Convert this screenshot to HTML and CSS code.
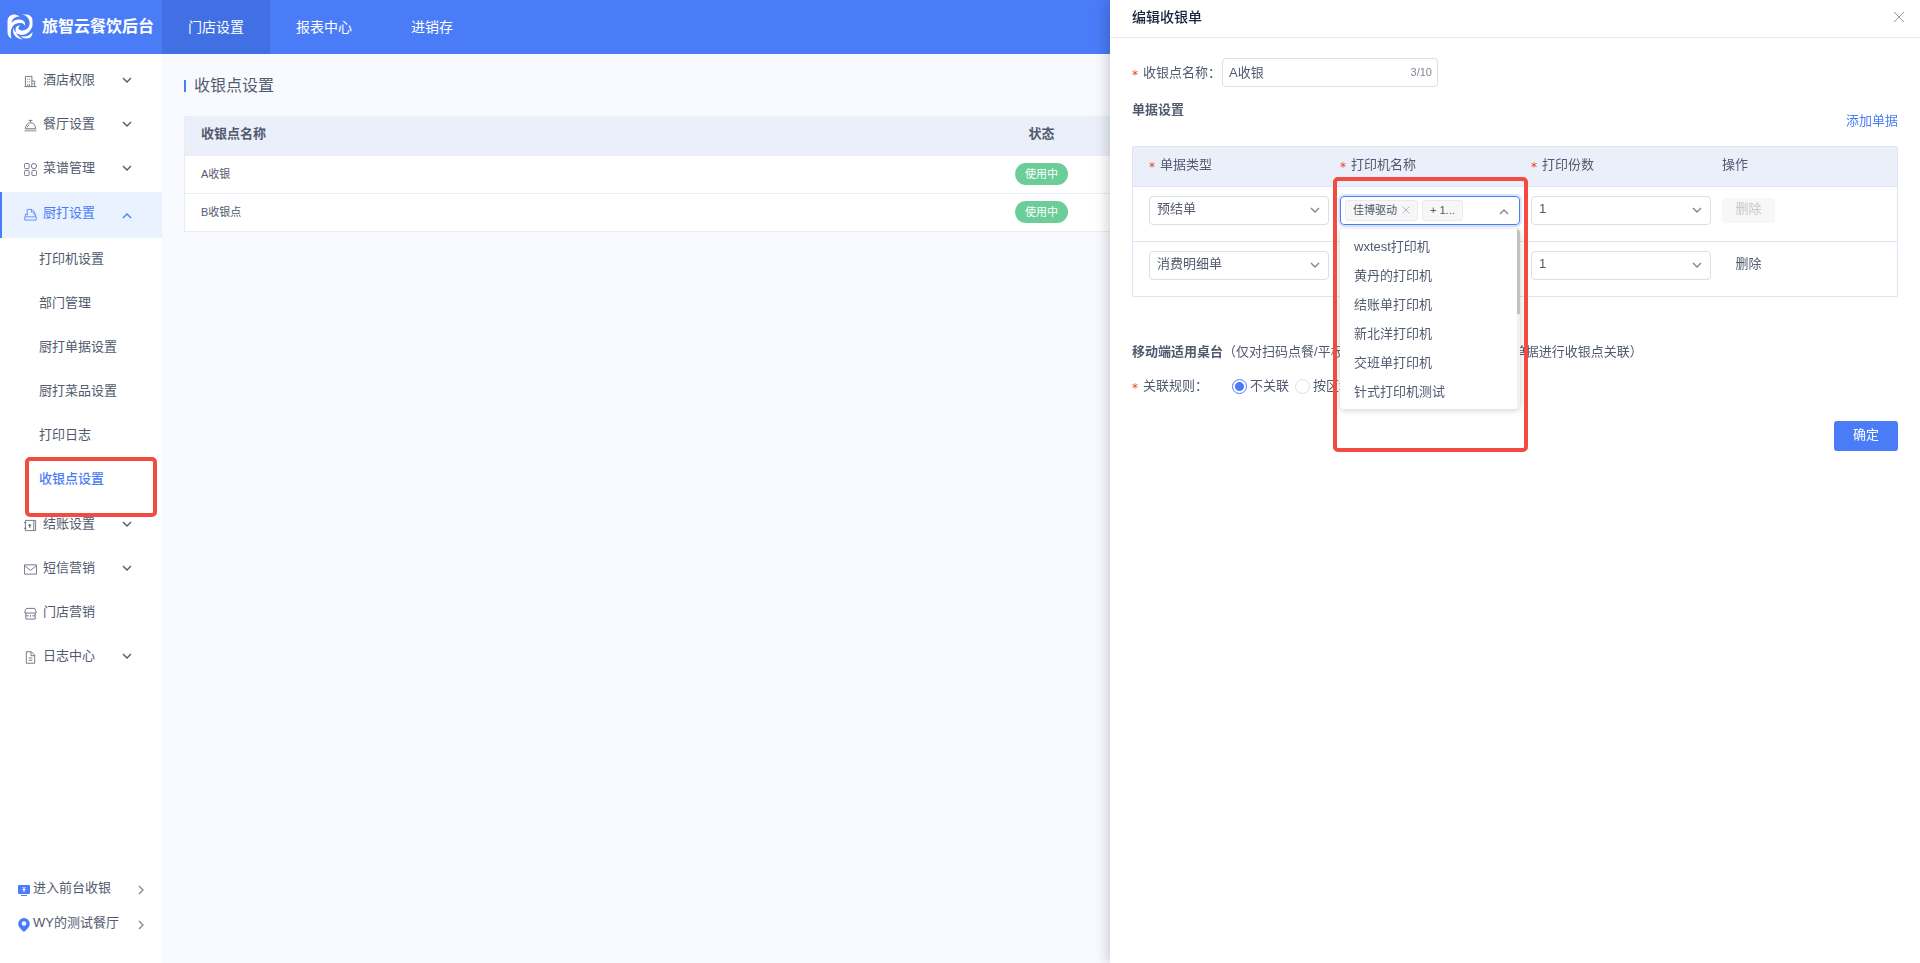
FILE: index.html
```html
<!DOCTYPE html>
<html lang="zh-CN">
<head>
<meta charset="utf-8">
<title>旅智云餐饮后台</title>
<meta name="viewport" content="width=device-width, initial-scale=1">
<link rel="stylesheet" href="styles.css">
</head>
<body>
<svg class="defs" aria-hidden="true">
  <symbol id="down" viewBox="0 0 10 6"><path d="M1 1l4 4 4-4" fill="none" stroke="currentColor" stroke-width="1.4"/></symbol>
  <symbol id="up" viewBox="0 0 10 6"><path d="M1 5l4-4 4 4" fill="none" stroke="currentColor" stroke-width="1.4"/></symbol>
  <symbol id="right" viewBox="0 0 6 10"><path d="M1 1l4 4-4 4" fill="none" stroke="currentColor" stroke-width="1.3"/></symbol>
  <symbol id="cross" viewBox="0 0 12 12"><path d="M1 1l10 10M11 1L1 11" fill="none" stroke="currentColor"/></symbol>
</svg>
<header class="topbar">
  <div class="brand">
    <svg class="logo" viewBox="0 0 26 26" aria-hidden="true">
      <path d="M8 .5C3 .5.500 3 .5 8v10c0 3 1.500 5.500 4 6.500C2 15 6 9.500 12 9c3.500-.3 6 1 5.500 3.500C19.500 8 16 5 11 5.500 8 5.800 6 7 4.500 9 5 4 9 2.500 13 2.500 10 1 8 .5 8 .5z" fill="#fff"/>
      <path d="M15 .5c4 .5 6.500 3 7.500 7 .8 5-2 8.500-7 9-2.500.2-4-1-4-2.500 0-1 .7-2 2-2.500-2.500-.5-5 1-5 4 0 4 4 6.500 9 5 4-1 7-5 8-9V7c0-4-2.500-6.500-6.500-6.500z" fill="#fff"/>
      <path d="M6.500 13.500C4.500 20 9 25 16 25.500c-4-2-6.500-5-6.500-7-2-1-3-3-3-5zM13 22c3 2.500 6 3 9.500 2 2-1 3-3 3-6-3 4-8 5.500-12.500 4z" fill="#fff"/>
    </svg>
    <span>旅智云餐饮后台</span>
  </div>
  <nav class="tabs">
    <a class="tab on" href="#store">门店设置</a>
    <a class="tab" href="#report">报表中心</a>
    <a class="tab" href="#stock">进销存</a>
  </nav>
</header>
<div class="layout">
  <aside class="sidebar">
    <ul class="menu">
      <li><a class="item" href="#hotel"><svg class="ico" viewBox="0 0 14 14"><path d="M1.500 12.500V1.500h7v11M8.500 6.500h3v6M.5 12.500h13M4 4v1m2-1v1M4 7v1m2-1v1M4 10v2m2-2v2M10 9v1"/></svg><span>酒店权限</span><svg class="arrow"><use href="#down"/></svg></a></li>
      <li><a class="item" href="#restaurant"><svg class="ico" viewBox="0 0 14 14"><path d="M1.500 10.500a5.500 6.500 0 0 1 11 0zM5 1.500h4M7 1.500V4M3.500 9q.5-2 2-2.700"/><path d="M.5 12.500h13" stroke-width="2" opacity=".5"/></svg><span>餐厅设置</span><svg class="arrow"><use href="#down"/></svg></a></li>
      <li><a class="item" href="#recipe"><svg class="ico" viewBox="0 0 14 14"><rect x=".5" y=".5" width="5" height="5.500" rx="1"/><circle cx="10.700" cy="3.300" r="2.800"/><rect x=".5" y="8" width="5" height="5.500" rx="1"/><rect x="8.500" y="8" width="5" height="5.500" rx="1"/></svg><span>菜谱管理</span><svg class="arrow"><use href="#down"/></svg></a></li>
      <li>
        <a class="item on" href="#kitchen"><svg class="ico" viewBox="0 0 14 14"><path d="M3.500 8V1.500h5L11 4v4M8 1.500V4.500h3M3.500 6.500H1.500v3M11 6.500h1.500v3M.8 9.500h12.400v3.500H.8z"/></svg><span>厨打设置</span><svg class="arrow low"><use href="#up"/></svg></a>
        <ul class="submenu">
          <li><a href="#printer">打印机设置</a></li>
          <li><a href="#dept">部门管理</a></li>
          <li><a href="#ticket">厨打单据设置</a></li>
          <li><a href="#dish">厨打菜品设置</a></li>
          <li><a href="#printlog">打印日志</a></li>
          <li class="marked"><a class="current" href="#cashier">收银点设置</a><span class="mark mark-side"></span></li>
        </ul>
      </li>
      <li><a class="item" href="#checkout"><svg class="ico" viewBox="0 0 14 14"><path d="M1.500 1.500h9v11h-9zM10.500 1.500h2v11h-2M0 4h2.500M0 10h2.500"/><path d="M6.200 9.500v-4M4.700 6.800h3" stroke-width="1.400"/></svg><span>结账设置</span><svg class="arrow"><use href="#down"/></svg></a></li>
      <li><a class="item" href="#sms"><svg class="ico" viewBox="0 0 14 14"><path d="M.5 2h13v10H.5zM.8 3L7 8l6.200-5"/></svg><span>短信营销</span><svg class="arrow"><use href="#down"/></svg></a></li>
      <li><a class="item" href="#promo"><svg class="ico" viewBox="0 0 14 14"><path d="M2.500 1.500h9l1.500 3v2H1v-2zM2 6.500v6.500h10V6.500M7 8.500v2M2 9.500h3m4 0h3"/></svg><span>门店营销</span></a></li>
      <li><a class="item" href="#log"><svg class="ico" viewBox="0 0 14 14"><path d="M2.500.8H8l3.500 3.700v8.700h-9zM7.500 1v4h4M5 7.500h4M5 10h4"/></svg><span>日志中心</span><svg class="arrow"><use href="#down"/></svg></a></li>
    </ul>
    <div class="links">
      <a href="#front"><svg class="ico2" viewBox="0 0 12 14"><rect x="0" y="2" width="12" height="9" rx="1" fill="#4a7cf7"/><path d="M3 12.500h6" stroke="#4a7cf7"/><path d="M4.500 4L6 5.500 7.500 4M6 5.500V9M4.500 6.500h3" stroke="#fff" fill="none"/></svg><span>进入前台收银</span><svg class="go"><use href="#right"/></svg></a>
      <a href="#shop"><svg class="ico2" viewBox="0 0 12 14"><path d="M6 0a5.800 5.800 0 0 0-5.800 5.800C.2 9 3 11.500 6 14c3-2.500 5.800-5 5.800-8.200A5.800 5.800 0 0 0 6 0z" fill="#4a7cf7"/><circle cx="6" cy="5.500" r="2.200" fill="#fff"/></svg><span>WY的测试餐厅</span><svg class="go"><use href="#right"/></svg></a>
    </div>
  </aside>
  <main class="main">
    <h1 class="title">收银点设置</h1>
    <table class="list">
      <thead><tr><th>收银点名称</th><th class="mid">状态</th><th></th></tr></thead>
      <tbody>
        <tr><td>A收银</td><td class="mid"><span class="pill">使用中</span></td><td></td></tr>
        <tr><td>B收银点</td><td class="mid"><span class="pill">使用中</span></td><td></td></tr>
      </tbody>
    </table>
  </main>
</div>
<section class="drawer" role="dialog" aria-labelledby="drawer-title">
  <header class="drawer-head">
    <h2 id="drawer-title">编辑收银单</h2>
    <button class="close" type="button" aria-label="关闭"><svg><use href="#cross"/></svg></button>
  </header>
  <form class="form">
    <div class="row">
      <label class="label req" for="name">收银点名称：</label>
      <div class="field"><input id="name" type="text" maxlength="10" value="A收银"><span class="count">3/10</span></div>
    </div>
    <div class="section">
      <h3>单据设置</h3>
      <a class="add" href="#add">添加单据</a>
    </div>
    <table class="bills">
      <thead><tr><th class="c1"><span class="req">单据类型</span></th><th class="c2"><span class="req">打印机名称</span></th><th class="c2"><span class="req">打印份数</span></th><th>操作</th></tr></thead>
      <tbody>
        <tr>
          <td><div class="select"><select aria-label="单据类型"><option>预结单</option></select><svg><use href="#down"/></svg></div></td>
          <td>
            <div class="picker">
              <div class="multi" role="combobox" aria-label="打印机名称" aria-expanded="true" tabindex="0">
                <span class="tag">佳博驱动<button type="button" aria-label="移除"><svg><use href="#cross"/></svg></button></span>
                <span class="tag">+ 1...</span>
                <svg class="caret"><use href="#up"/></svg>
              </div>
              <ul class="options" role="listbox">
                <li role="option">wxtest打印机</li>
                <li role="option">黄丹的打印机</li>
                <li role="option">结账单打印机</li>
                <li role="option">新北洋打印机</li>
                <li role="option">交班单打印机</li>
                <li role="option">针式打印机测试</li>
              </ul>
              <span class="mark mark-picker"></span>
            </div>
          </td>
          <td><div class="select"><select aria-label="打印份数"><option>1</option></select><svg><use href="#down"/></svg></div></td>
          <td><button class="del" type="button" disabled>删除</button></td>
        </tr>
        <tr>
          <td><div class="select"><select aria-label="单据类型"><option>消费明细单</option></select><svg><use href="#down"/></svg></div></td>
          <td></td>
          <td><div class="select"><select aria-label="打印份数"><option>1</option></select><svg><use href="#down"/></svg></div></td>
          <td><button class="del" type="button">删除</button></td>
        </tr>
      </tbody>
    </table>
    <p class="scope"><b>移动端适用桌台</b>（仅对扫码点餐/平板点餐下单时所产生的各类收银单据进行收银点关联）</p>
    <div class="row rules" role="radiogroup" aria-labelledby="rule">
      <span class="label req" id="rule">关联规则：</span>
      <label class="radio"><input type="radio" name="rule" checked>不关联</label>
      <label class="radio"><input type="radio" name="rule">按区域</label>
    </div>
    <div class="actions"><button class="ok" type="submit">确定</button></div>
  </form>
</section>
</body>
</html>
```
FILE: styles.css
```css
* { box-sizing: border-box; }
body {
  margin: 0;
  min-height: 100vh;
  display: flex;
  flex-direction: column;
  background: #f9faff;
  color: #515a6e;
  font: 13px/20px "Liberation Sans", "Noto Sans CJK SC", sans-serif;
}
ul, h1, h2, h3, p { margin: 0; padding: 0; list-style: none; }
a { color: inherit; text-decoration: none; }
button, input, select { font: inherit; color: inherit; }
button { border: 0; padding: 0; background: none; }
.defs { display: none; }

.topbar { display: flex; height: 54px; background: #4a7cf7; color: #fff; }
.brand { width: 162px; display: flex; align-items: center; gap: 9px; padding-left: 7px; font-size: 16px; font-weight: 700; white-space: nowrap; }
.logo { width: 26px; height: 26px; flex: none; }
.tabs { display: flex; }
.tab { min-width: 108px; padding: 0 25px; text-align: center; font-size: 14px; line-height: 54px; }
.tab.on { background: #4070e4; }

.layout { flex: 1; display: flex; }
.sidebar { width: 162px; flex: none; display: flex; flex-direction: column; justify-content: space-between; padding: 6px 0 23px; background: #fff; }
.item { display: flex; align-items: center; height: 44px; padding: 0 30px 4px 24px; }
.item.on { height: 46px; padding-left: 22px; border-left: 2px solid #4a7cf7; background: #ebf2ff; color: #4a7cf7; }
.ico { width: 13px; height: 13px; margin: 3px 6px 0 0; fill: none; stroke: currentColor; stroke-width: 1; opacity: .85; }
.arrow { width: 10px; height: 6px; margin-left: auto; }
.arrow.low { margin-top: 6px; }
.submenu { padding: 1px 0; }
.submenu a { display: flex; align-items: center; height: 44px; padding: 0 0 4px 39px; }
.submenu .current { color: #4a7cf7; font-weight: 500; }
.marked { position: relative; }
.mark { position: absolute; border: 4px solid #f34b3f; border-radius: 5px; pointer-events: none; z-index: 5; }
.mark-side { top: -2px; left: 25px; width: 132px; height: 60px; }
.links a { display: flex; align-items: center; height: 35px; padding: 0 18px; }
.ico2 { width: 12px; height: 14px; margin: 4px 3px 0 0; }
.go { width: 6px; height: 10px; margin: 4px 0 0 auto; color: #808695; }

.main { flex: 1; padding: 22px 22px; }
.title { display: flex; align-items: center; gap: 8px; height: 20px; margin-bottom: 20px; font-size: 16px; font-weight: 400; }
.title::before { content: ""; width: 2px; height: 12px; background: #4a7cf7; }
.list { width: 100%; table-layout: fixed; border-collapse: separate; border-spacing: 0; border-left: 1px solid #e8ecf7; background: #fff; font-size: 11px; }
.list th { height: 40px; padding: 0 16px 4px; background: #ebeffa; font-size: 13px; text-align: left; }
.list td { height: 38px; padding: 0 16px 2px; border-bottom: 1px solid #e8ecf7; }
.list .mid { text-align: center; }
.pill { display: inline-block; padding: 0 10px; border-radius: 11px; background: #6bcd97; color: #fff; line-height: 22px; }

.drawer { position: fixed; top: 0; right: 0; bottom: 0; width: 810px; max-width: 100%; background: #fff; box-shadow: -3px 0 12px rgba(0, 0, 0, .18); }
.drawer-head { display: flex; align-items: center; justify-content: space-between; height: 38px; padding: 0 15px 4px 22px; border-bottom: 1px solid #e8eaec; }
.drawer-head h2 { font-size: 14px; font-weight: 500; color: #17233d; }
.close { display: flex; color: #999; }
.close svg { width: 12px; height: 12px; }
.form { padding: 20px 22px; }
.row { display: flex; align-items: center; }
.label { width: 90px; }
.req::before { content: "*"; margin-right: 5px; color: #ed4014; font-family: "DejaVu Sans", sans-serif; font-size: 12px; line-height: 1; vertical-align: -2px; }
.field { position: relative; width: 216px; }
.field input { width: 100%; height: 29px; padding: 0 44px 3px 6px; border: 1px solid #dcdee2; border-radius: 4px; outline: 0; background: #fff; }
.count { position: absolute; right: 6px; top: 4px; font-size: 11px; color: #808695; }
.section { display: flex; justify-content: space-between; height: 59px; padding-top: 13px; }
.section h3 { font-size: 13px; }
.section .add { margin-top: 11px; color: #4a7cf7; }
.bills { width: 100%; table-layout: fixed; border-collapse: separate; border-spacing: 0; border: 1px solid #dfe3f5; border-bottom: 0; border-radius: 2px; }
.bills th { height: 40px; padding: 0 8px 3px; background: #ebeffa; border-bottom: 1px solid #dfe3f5; font-weight: 400; text-align: left; }
.bills td { padding: 9px 8px 16px; height: 55px; border-bottom: 1px solid #dfe3f5; vertical-align: top; }
.bills th:first-child, .bills td:first-child { padding-left: 16px; }
.bills td:nth-child(-n+3), .bills th:nth-child(-n+3) { padding-right: 3px; }
.c1 { width: 199px; }
.c2 { width: 191px; }
.select { position: relative; height: 29px; width: 180px; }
.select select { display: block; width: 100%; height: 29px; padding: 0 24px 3px 7px; border: 1px solid #dcdee2; border-radius: 4px; background: #fff; appearance: none; }
.select svg { position: absolute; right: 9px; top: 11px; width: 10px; height: 6px; color: #808695; pointer-events: none; }
.del { width: 53px; height: 25px; margin-top: 2px; padding-bottom: 3px; border-radius: 4px; }
.del:disabled { background: #f7f7f7; color: #c5c8ce; }

.picker { position: relative; width: 180px; }
.multi { display: flex; align-items: center; gap: 4px; height: 29px; padding: 0 10px 1px 4px; border: 1px solid #4a7cf7; border-radius: 4px; box-shadow: 0 0 0 2px rgba(74, 124, 247, .2); }
.tag { display: flex; align-items: center; gap: 5px; height: 21px; padding: 0 7px; border: 1px solid #e8eaec; border-radius: 3px; background: #f7f7f7; font-size: 11px; }
.tag button { display: flex; color: #999; }
.tag button svg { width: 8px; height: 8px; }
.caret { width: 10px; height: 6px; margin: 3px 0 0 auto; color: #808695; }
.options { position: absolute; z-index: 4; top: 33px; left: 0; width: 100%; padding: 4px 0 2px; border-radius: 4px; background: linear-gradient(#c1c1c1, #c1c1c1) right top / 3px 85px no-repeat, linear-gradient(#f1f1f1, #f1f1f1) right top / 3px 100% no-repeat, #fff; box-shadow: 0 1px 6px rgba(0, 0, 0, .2); }
.options li { padding: 4px 14px 5px; }
.mark-picker { top: -19px; left: -7px; width: 195px; height: 275px; }

.scope { margin-top: 45px; white-space: nowrap; }
.rules { margin-top: 14px; }
.rules .label { width: 100px; }
.radio { display: flex; align-items: center; margin-right: 6px; }
.radio input { appearance: none; width: 15px; height: 15px; margin: 0 3px 0 0; border: 1px solid #dcdee2; border-radius: 50%; background: #fff; }
.radio input:checked { border-color: #4a7cf7; background: radial-gradient(#4a7cf7 4px, #fff 5px); }
.actions { display: flex; justify-content: flex-end; margin-top: 25px; }
.ok { width: 64px; height: 30px; padding-bottom: 3px; border-radius: 3px; background: #4a7cf7; color: #fff; }
```
